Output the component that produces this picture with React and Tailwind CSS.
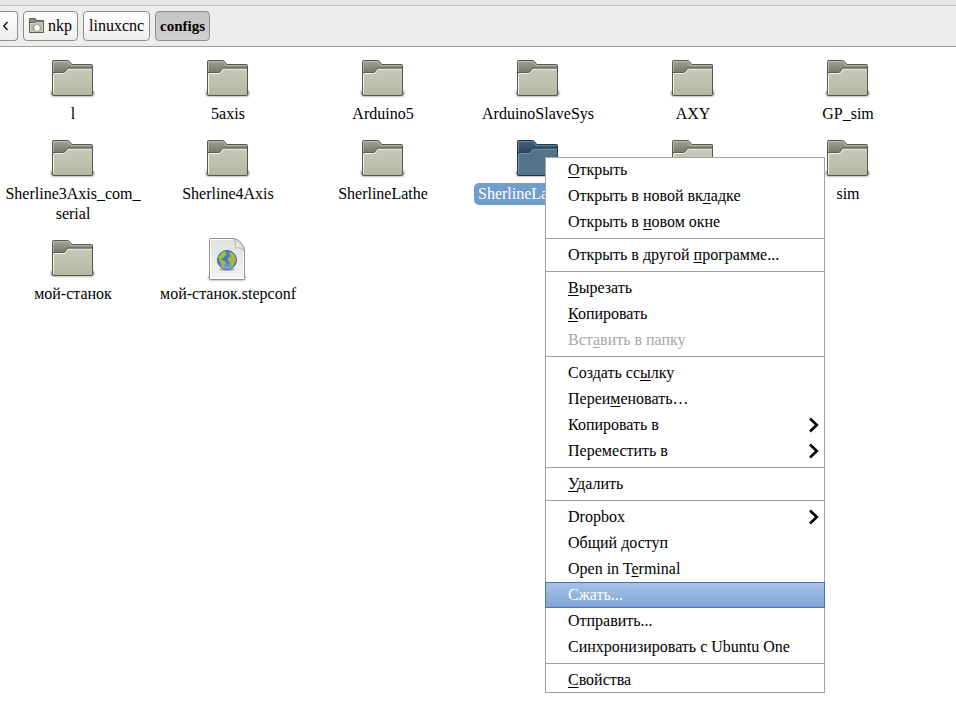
import { Fragment, useState } from 'react';
import clsx from 'clsx';

const files = [
  { name: 'l' },
  { name: '5axis' },
  { name: 'Arduino5' },
  { name: 'ArduinoSlaveSys' },
  { name: 'AXY' },
  { name: 'GP_sim' },
  { name: 'Sherline3Axis_com_serial' },
  { name: 'Sherline4Axis' },
  { name: 'SherlineLathe' },
  { name: 'SherlineLathe', selected: true },
  { name: '' },
  { name: 'sim' },
  { name: 'мой-станок' },
  { name: 'мой-станок.stepconf', type: 'document' },
];

// "_" goes before the mnemonic letter
const menuGroups = [
  [
    { label: '_Открыть' },
    { label: 'Открыть в новой вк_ладке' },
    { label: 'Открыть в _новом окне' },
  ],
  [{ label: 'Открыть в другой _программе...' }],
  [
    { label: '_Вырезать' },
    { label: '_Копировать' },
    { label: 'Вст_авить в папку', disabled: true },
  ],
  [
    { label: 'Создать сс_ылку' },
    { label: 'Переи_меновать…' },
    { label: 'Копировать в', submenu: true },
    { label: 'Переместить в', submenu: true },
  ],
  [{ label: '_Удалить' }],
  [
    { label: 'Dropbox', submenu: true },
    { label: 'Общий доступ' },
    { label: 'Open in T_erminal' },
    { label: 'Сжать...' },
    { label: 'Отправить...' },
    { label: 'Синхронизировать с Ubuntu One' },
  ],
  [{ label: '_Свойства' }],
];

const FolderIcon = ({ selected }) => (
  <svg viewBox="0 0 48 48" className="h-12 w-12" aria-hidden="true">
    <defs>
      <linearGradient id="folder-back" x1="0" y1="0" x2="0" y2="1">
        <stop offset="0" stopColor="#a3a495" />
        <stop offset="0.35" stopColor="#777868" />
        <stop offset="1" stopColor="#777868" />
      </linearGradient>
      <linearGradient id="folder-front" x1="0" y1="0" x2="0" y2="1">
        <stop offset="0" stopColor="#c8c9b9" />
        <stop offset="1" stopColor="#b7b8a2" />
      </linearGradient>
      <linearGradient id="folder-back-selected" x1="0" y1="0" x2="0" y2="1">
        <stop offset="0" stopColor="#45647f" />
        <stop offset="0.35" stopColor="#2e4558" />
        <stop offset="1" stopColor="#2e4558" />
      </linearGradient>
      <filter id="folder-shadow" x="-20%" y="-100%" width="140%" height="300%">
        <feGaussianBlur stdDeviation="0.9" />
      </filter>
    </defs>
    <rect x="2.3" y="34.5" width="42.6" height="5.6" rx="2" fill="#000" opacity="0.6" filter="url(#folder-shadow)" />
    <path
      d="M3.5 38V5.5Q3.5 4.5 4.5 4.5H18.5Q19.8 4.5 20.4 5.4L22.8 8.5H42.5Q43.5 8.5 43.5 9.5V38Q43.5 39.5 42 39.5H5Q3.5 39.5 3.5 38Z"
      fill={selected ? 'url(#folder-back-selected)' : 'url(#folder-back)'}
      stroke={selected ? '#24384a' : '#555753'}
    />
    <path
      d="M4.5 16V5.5H18.9L22 9.5H42.5"
      fill="none"
      stroke={selected ? '#6b8fb0' : '#c3c4b6'}
      strokeOpacity="0.7"
    />
    <path
      d="M4 38V17H14.5L16.2 16L18 13.3L19.5 12.5H43V38L42 39H5Z"
      fill={selected ? '#557388' : 'url(#folder-front)'}
    />
    <path
      d="M4.5 38V18.5Q4.5 17.5 5.5 17.5H14.8Q16.2 17.5 16.8 16.3L18.2 14.3Q18.8 13.2 20.3 13.2H42.5"
      fill="none"
      stroke={selected ? '#7196b9' : '#f2f3e6'}
    />
    <path
      d="M4 16.5H14.3Q15.5 16.5 16.2 15.3L17.6 13Q18.3 12 19.7 12H43"
      fill="none"
      stroke={selected ? '#2a4155' : '#5d5e52'}
    />
  </svg>
);

const DocumentIcon = () => (
  <svg viewBox="0 0 48 48" className="h-12 w-12" aria-hidden="true">
    <defs>
      <linearGradient id="page" x1="0" y1="0" x2="0" y2="1">
        <stop offset="0" stopColor="#e0e1de" />
        <stop offset="1" stopColor="#f4f4f3" />
      </linearGradient>
      <linearGradient id="page-curl" x1="0" y1="1" x2="1" y2="0">
        <stop offset="0" stopColor="#fff" />
        <stop offset="0.5" stopColor="#e4e5e1" />
        <stop offset="1" stopColor="#aeb0ab" />
      </linearGradient>
      <linearGradient id="globe" x1="0" y1="0" x2="0" y2="1">
        <stop offset="0" stopColor="#4d7cc0" />
        <stop offset="0.6" stopColor="#4a79bf" />
        <stop offset="1" stopColor="#8db2e4" />
      </linearGradient>
      <filter id="page-shadow" x="-20%" y="-100%" width="140%" height="300%">
        <feGaussianBlur stdDeviation="0.9" />
      </filter>
    </defs>
    <rect x="4.5" y="39.5" width="37" height="4.5" rx="2" fill="#000" opacity="0.5" filter="url(#page-shadow)" />
    <path d="M6.5 2.5H29Q33 2.5 37 6.5Q40.5 10.5 40.5 14.5V42.5Q40.5 43.5 39.5 43.5H6.5Q5.5 43.5 5.5 42.5V3.5Q5.5 2.5 6.5 2.5Z" fill="url(#page)" stroke="#90928e" />
    <path d="M29 3.5H6.5V42.5H39.5V16" fill="none" stroke="#fff" />
    <path d="M29 3Q32.5 5.5 31.5 12Q38 11 40 15Q40.2 10 36.5 6.5Q33 3 29 3Z" fill="url(#page-curl)" stroke="#a6a8a3" strokeWidth="0.7" />
    <ellipse cx="23" cy="33.5" rx="8" ry="1.6" fill="#000" opacity="0.25" />
    <circle cx="23" cy="24" r="9.5" fill="url(#globe)" stroke="#3465a4" />
    {/* Americas */}
    <path
      d="M14.2 21.5Q16 17.2 19.6 15.6L22.4 15.8L21.4 17.4L22.8 18.6L20.6 20.2L19.2 22L17.4 22.4L16.8 23.6L18.6 24.4L21 25.2L22 27L20.4 29.2L19.6 32.2Q17.8 31 17.6 28L15.8 25.4Z"
      fill="#a9bb3c"
    />
    {/* Europe and Africa */}
    <path
      d="M25.6 15.6L29 17.2L31.4 20.6L32 24L30.4 26.4L29.2 29.4L27.6 31.2L26.2 29L26.4 26.4L24.2 25.2L23.9 22.4L25.8 20.8L27.6 20.2L25.4 18.4Z"
      fill="#a9bb3c"
    />
  </svg>
);

const HomeFolderIcon = () => (
  <svg viewBox="0 0 16 16" className="h-4 w-4 shrink-0" aria-hidden="true">
    <path d="M0.5 14.5V0.5H6.5L7.5 2.5H14.5V14.5Z" fill="#8d8e7e" stroke="#5f6157" />
    <path d="M1 4.5H6L7 3.5H14" fill="none" stroke="#6c6e61" />
    <path d="M1.5 13.5V5.5H6.5L7.5 4.5H13.5V13.5Z" fill="#b8b9a7" stroke="#d3d4c6" />
    <path d="M8 5.8L3.6 9.8H5.2V13H11V9.8H12.5Z" fill="#fff" stroke="#85877a" strokeWidth="0.7" />
  </svg>
);

const SubmenuArrow = () => (
  <svg viewBox="0 0 10 16" className="h-4 w-[10px]" aria-hidden="true">
    <path d="M1 1.5L7.8 8L1 14.5" fill="none" stroke="#000" strokeWidth="2.6" />
  </svg>
);

const PathButton = ({ active, children }) => (
  <button
    className={clsx(
      'flex h-[30px] items-center gap-[3px] rounded border border-[#8f8d8b]',
      active
        ? 'bg-linear-to-b from-[#c6c4c2] to-[#d3d1cf] px-1 text-[15px] font-bold'
        : 'bg-linear-to-b from-white to-[#efeeed] px-[5px]'
    )}
  >
    {children}
  </button>
);

// long names may only wrap after an underscore
const FileName = ({ name }) =>
  name.split('_').map((part, i) => (
    <Fragment key={i}>
      {i > 0 && (
        <>
          _<wbr />
        </>
      )}
      {part}
    </Fragment>
  ));

const FileItem = ({ file }) => (
  <li className="flex flex-col items-center">
    {file.type === 'document' ? <DocumentIcon /> : <FolderIcon selected={file.selected} />}
    {file.selected ? (
      <span className="-my-px w-[128px] rounded-[5px] bg-[#729bce] px-1 py-px text-white">{file.name}</span>
    ) : (
      <span className="w-[140px] text-center">
        <FileName name={file.name} />
      </span>
    )}
  </li>
);

const MenuLabel = ({ text }) => {
  const i = text.indexOf('_');
  if (i < 0) return <span>{text}</span>;
  return (
    <span>
      {text.slice(0, i)}
      <u className="underline-offset-2 decoration-1 [text-decoration-skip-ink:none]">{text[i + 1]}</u>
      {text.slice(i + 2)}
    </span>
  );
};

const ContextMenu = () => {
  const [active, setActive] = useState('Сжать...');

  return (
    <div
      role="menu"
      className="absolute top-[157px] left-[545px] w-[280px] bg-white shadow-[inset_0_0_0_1px_#a3a3a3]"
    >
      {menuGroups.map((group, g) => (
        <div key={g} role="group">
          {g > 0 && <div className="my-[3px] h-px bg-[#a3a3a3]" />}
          {group.map((item) => (
            <button
              key={item.label}
              role="menuitem"
              disabled={item.disabled}
              onMouseEnter={() => setActive(item.label)}
              className={clsx(
                'flex h-[26px] w-full items-center justify-between border pr-[5px] pl-[22px]',
                item.label === active
                  ? 'border-[#4a74ab] bg-linear-to-b from-[#a6c1e7] to-[#7fa5d8] text-white'
                  : 'border-transparent',
                item.disabled && 'text-[#a6a6a6]'
              )}
            >
              <MenuLabel text={item.label} />
              {item.submenu && <SubmenuArrow />}
            </button>
          ))}
        </div>
      ))}
    </div>
  );
};

const App = () => (
  <div className="relative min-h-screen bg-white font-['Liberation_Serif',serif] text-base leading-5 text-black">
    <header className="border-b border-[#a09e9c] bg-[#edeceb]">
      <div className="h-[6px] border-b border-[#c3c1bf] bg-[#e8e7e5]" />
      <nav className="flex gap-[5px] py-[5px]">
        <button
          aria-label="Назад"
          className="flex h-[30px] w-[18px] items-center rounded-r border border-l-0 border-[#8f8d8b] bg-linear-to-b from-white to-[#efeeed] pl-[2px]"
        >
          <svg viewBox="0 0 8 10" className="h-[10px] w-2" aria-hidden="true">
            <path d="M5.5 1L1.8 5L5.5 9" fill="none" stroke="#1a1a1a" strokeWidth="1.5" />
          </svg>
        </button>
        <PathButton>
          <HomeFolderIcon />
          nkp
        </PathButton>
        <PathButton>linuxcnc</PathButton>
        <PathButton active>configs</PathButton>
      </nav>
    </header>

    <main>
      <ul className="grid grid-cols-[repeat(auto-fill,146px)] gap-x-[9px] gap-y-3 pt-[9px]">
        {files.map((file, i) => (
          <FileItem key={i} file={file} />
        ))}
      </ul>
    </main>

    <ContextMenu />
  </div>
);

export default App;
